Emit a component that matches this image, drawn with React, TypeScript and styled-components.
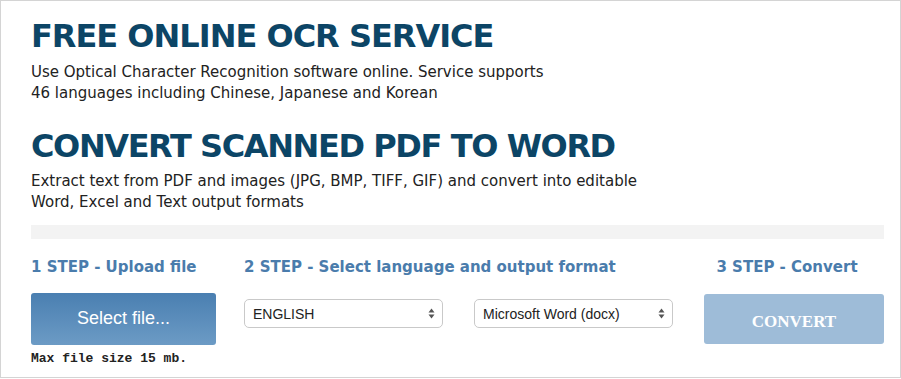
import styled, { createGlobalStyle } from "styled-components";

const GlobalStyle = createGlobalStyle`
	* {
		box-sizing: border-box;
	}
	body {
		margin: 0;
		background: #fff;
		font-family: "DejaVu Sans", Verdana, sans-serif;
	}
`;

const Page = styled.div`
	width: 901px;
	height: 378px;
	border: 1px solid #d4d4d4;
	padding: 0 16px 0 30px;
	overflow: hidden;
`;

const Title = styled.h1<{ $top: number; $tracking: number }>`
	margin: ${(p) => p.$top}px 0 0;
	font-size: 32px;
	line-height: 40px;
	font-weight: bold;
	letter-spacing: ${(p) => p.$tracking}px;
	color: #0c4566;
	white-space: nowrap;
`;

const Lead = styled.p<{ $top: number }>`
	margin: ${(p) => p.$top}px 0 0;
	font-size: 15px;
	line-height: 21px;
	color: #222;
	white-space: nowrap;
`;

const Divider = styled.div`
	height: 14px;
	margin-top: 12px;
	background: #f3f3f3;
`;

const Steps = styled.div`
	display: grid;
	grid-template-columns: 185px 1fr 180px;
	column-gap: 28px;
	row-gap: 16px;
	margin-top: 18px;
`;

const StepHeading = styled.h3<{ $center?: boolean }>`
	margin: 0;
	font-size: 15px;
	line-height: 20px;
	font-weight: bold;
	color: #4a7cac;
	white-space: nowrap;
	text-align: ${(p) => (p.$center ? "center" : "left")};
	padding-right: ${(p) => (p.$center ? "14px" : "0")};
`;

const UploadCell = styled.div`
	display: flex;
	flex-direction: column;
`;

const UploadButton = styled.button`
	width: 185px;
	height: 52px;
	border: 0;
	border-radius: 3px;
	background: linear-gradient(#4a7fb1, #6c9bc5);
	color: #fff;
	font-family: "Liberation Sans", Arial, sans-serif;
	font-size: 18px;
	padding-bottom: 3px;
	cursor: pointer;
`;

const Note = styled.div`
	margin-top: 6px;
	font-family: "Liberation Mono", "Courier New", monospace;
	font-size: 13px;
	font-weight: bold;
	color: #222;
`;

const SelectRow = styled.div`
	display: flex;
	gap: 31px;
	padding-top: 6px;
`;

const SelectWrap = styled.div`
	position: relative;
	width: 199px;
	height: 29px;
`;

const Select = styled.select`
	appearance: none;
	width: 100%;
	height: 100%;
	border: 1px solid #c9c9c9;
	border-radius: 5px;
	background: #fff;
	padding: 0 24px 0 8px;
	font-family: "Liberation Sans", Arial, sans-serif;
	font-size: 14px;
	color: #222;
`;

const Arrows = styled.svg`
	position: absolute;
	right: 8px;
	top: 9px;
	pointer-events: none;
`;

const ConvertButton = styled.button`
	width: 180px;
	height: 50px;
	margin-top: 1px;
	border: 0;
	border-radius: 3px;
	background: #9ebcd8;
	color: #fff;
	font-family: "Liberation Serif", "Times New Roman", serif;
	font-size: 17px;
	font-weight: bold;
	padding-top: 7px;
`;

const UpDown = () => (
	<Arrows width="7" height="11" viewBox="0 0 7 11">
		<path d="M3.5 0.5 L6.5 4.5 H0.5 Z" fill="#555" />
		<path d="M3.5 10.5 L6.5 6.5 H0.5 Z" fill="#555" />
	</Arrows>
);

export default function App() {
	return (
		<>
			<GlobalStyle />
			<Page>
				<Title $top={15} $tracking={-1}>FREE ONLINE OCR SERVICE</Title>
				<Lead $top={6}>
					Use Optical Character Recognition software online. Service supports
					<br />
					46 languages including Chinese, Japanese and Korean
				</Lead>
				<Title $top={22} $tracking={-1.4}>CONVERT SCANNED PDF TO WORD</Title>
				<Lead $top={5}>
					Extract text from PDF and images (JPG, BMP, TIFF, GIF) and convert into editable
					<br />
					Word, Excel and Text output formats
				</Lead>
				<Divider />
				<Steps>
					<StepHeading>1 STEP - Upload file</StepHeading>
					<StepHeading>2 STEP - Select language and output format</StepHeading>
					<StepHeading $center>3 STEP - Convert</StepHeading>
					<UploadCell>
						<UploadButton type="button">Select file...</UploadButton>
						<Note>Max file size 15 mb.</Note>
					</UploadCell>
					<SelectRow>
						<SelectWrap>
							<Select defaultValue="eng">
								<option value="eng">ENGLISH</option>
							</Select>
							<UpDown />
						</SelectWrap>
						<SelectWrap>
							<Select defaultValue="docx">
								<option value="docx">Microsoft Word (docx)</option>
							</Select>
							<UpDown />
						</SelectWrap>
					</SelectRow>
					<div>
						<ConvertButton type="button">CONVERT</ConvertButton>
					</div>
				</Steps>
			</Page>
		</>
	);
}
